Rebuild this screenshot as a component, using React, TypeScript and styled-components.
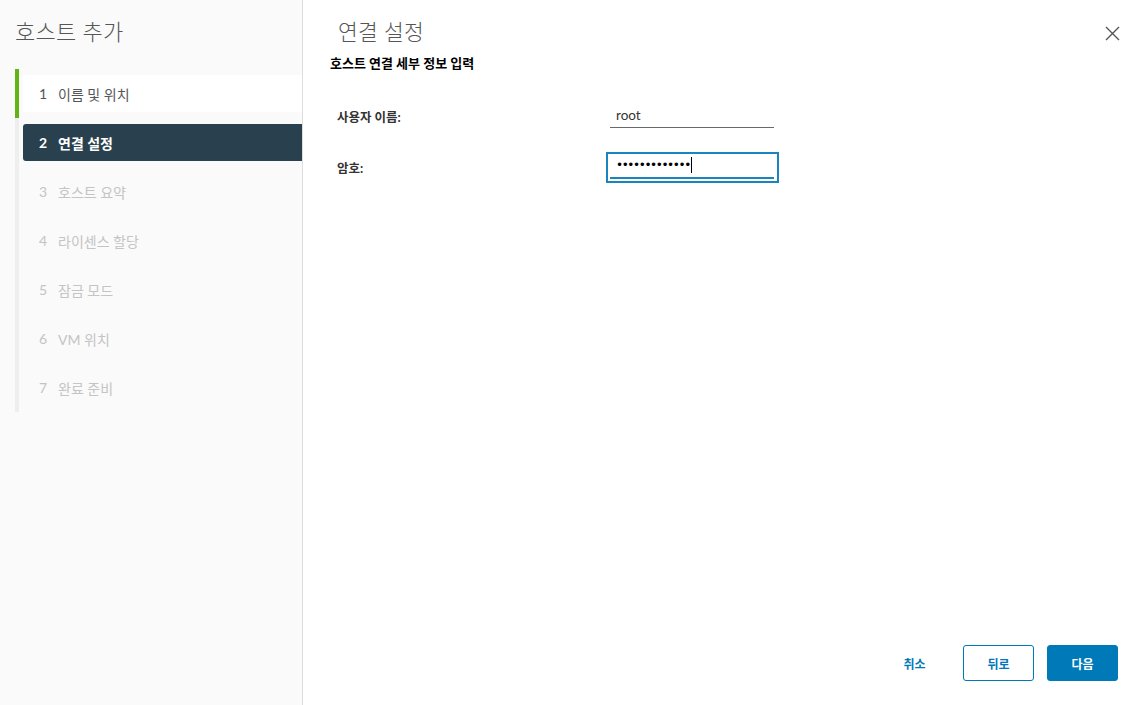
import React from "react";
import styled, { createGlobalStyle } from "styled-components";

const GlobalStyle = createGlobalStyle`
  html, body {
    margin: 0;
    padding: 0;
    background: #fff;
  }
  body {
    font-family: Lato, "Noto Sans CJK KR", sans-serif;
    color: #565656;
  }
`;

const Shell = styled.div`
  display: flex;
  height: 705px;
  width: 1142px;
  overflow: hidden;
`;

const Sidebar = styled.aside`
  width: 302px;
  flex-shrink: 0;
  background: #fafafa;
  border-right: 1px solid #dedede;
  padding-top: 18px;
  box-sizing: content-box;
`;

const SideTitle = styled.h1`
  margin: 0 0 23px 15px;
  font-size: 22px;
  line-height: 28px;
  font-weight: 300;
  color: #565656;
  letter-spacing: 0.2px;
`;

const StepList = styled.ol`
  list-style: none;
  margin: 0 0 0 15px;
  padding: 0;
`;

const StepSlot = styled.li<{ $done?: boolean }>`
  height: 49px;
  border-left: 4px solid ${(p) => (p.$done ? "#60b515" : "#eeeeee")};
  padding: 6px 0 6px 4px;
  box-sizing: border-box;
`;

const StepButton = styled.div<{ $state: "done" | "active" | "todo" }>`
  height: 37px;
  display: flex;
  align-items: center;
  padding-left: 16px;
  font-size: 14px;
  border-radius: ${(p) => (p.$state === "active" ? "3px 0 0 3px" : "0")};
  background: ${(p) =>
    p.$state === "active" ? "#29414e" : p.$state === "done" ? "#ffffff" : "transparent"};
  color: ${(p) =>
    p.$state === "active" ? "#ffffff" : p.$state === "done" ? "#565656" : "#c4c4c4"};
  font-weight: ${(p) => (p.$state === "active" ? 700 : 400)};
`;

const StepNum = styled.span`
  width: 19px;
  flex-shrink: 0;
`;

const Main = styled.section`
  flex: 1;
  display: flex;
  flex-direction: column;
  padding: 18px 18px 24px 27px;
`;

const Header = styled.div`
  display: flex;
  align-items: center;
  justify-content: space-between;
`;

const Title = styled.h2`
  margin: 0 0 0 8px;
  font-size: 21.5px;
  line-height: 28px;
  font-weight: 300;
  color: #565656;
  letter-spacing: 0.2px;
`;

const CloseButton = styled.button`
  border: 0;
  background: none;
  padding: 0;
  width: 24px;
  height: 24px;
  display: flex;
  align-items: center;
  justify-content: center;
  cursor: pointer;
  margin-top: 2px;
`;

const Subtitle = styled.p`
  margin: 8px 0 0;
  font-size: 13px;
  line-height: 18px;
  font-weight: 700;
  color: #000;
`;

const Form = styled.div`
  display: grid;
  grid-template-columns: 276px 173px;
  grid-auto-rows: 51px;
  margin-top: 19px;
  align-items: center;
`;

const Label = styled.label`
  padding-left: 7px;
  font-size: 12.5px;
  font-weight: 700;
  color: #333;
`;

const Field = styled.div<{ $focused?: boolean }>`
  height: 31px;
  box-sizing: border-box;
  border: 2px solid ${(p) => (p.$focused ? "#1a85bd" : "transparent")};
  padding: 0 2px 2px;
  display: flex;
  align-items: flex-end;
`;

const FieldInner = styled.div<{ $focused?: boolean }>`
  flex: 1;
  height: 24px;
  display: flex;
  align-items: center;
  padding-left: 6px;
  border-bottom: ${(p) => (p.$focused ? "2px solid #1a85bd" : "1px solid #6a6a6a")};
  font-size: 13.5px;
  color: #333;
  margin-right: 1px;
`;

const Dots = styled.span`
  font-size: 12px;
  letter-spacing: -1.4px;
  color: #000;
  font-family: "DejaVu Sans", sans-serif;
`;

const Caret = styled.span`
  display: inline-block;
  width: 1px;
  height: 16px;
  background: #000;
  margin-left: 1px;
`;

const Spacer = styled.div`
  flex: 1;
`;

const Footer = styled.div`
  display: flex;
  justify-content: flex-end;
  gap: 13px;
  padding-right: 6px;
`;

const Button = styled.button<{ $variant: "flat" | "outline" | "solid" }>`
  width: 71px;
  height: 36px;
  box-sizing: border-box;
  border-radius: 3px;
  font-family: Lato, "Noto Sans CJK KR", sans-serif;
  font-size: 12px;
  font-weight: 700;
  cursor: pointer;
  border: 1px solid ${(p) => (p.$variant === "flat" ? "transparent" : "#0079b8")};
  background: ${(p) => (p.$variant === "solid" ? "#0079b8" : "transparent")};
  color: ${(p) => (p.$variant === "solid" ? "#fff" : "#0079b8")};
`;

const steps: { label: string; state: "done" | "active" | "todo" }[] = [
  { label: "이름 및 위치", state: "done" },
  { label: "연결 설정", state: "active" },
  { label: "호스트 요약", state: "todo" },
  { label: "라이센스 할당", state: "todo" },
  { label: "잠금 모드", state: "todo" },
  { label: "VM 위치", state: "todo" },
  { label: "완료 준비", state: "todo" },
];

const App: React.FC = () => {
  return (
    <>
      <GlobalStyle />
      <Shell>
        <Sidebar>
          <SideTitle>호스트 추가</SideTitle>
          <StepList>
            {steps.map((s, i) => (
              <StepSlot key={s.label} $done={s.state === "done"}>
                <StepButton $state={s.state}>
                  <StepNum>{i + 1}</StepNum>
                  {s.label}
                </StepButton>
              </StepSlot>
            ))}
          </StepList>
        </Sidebar>
        <Main>
          <Header>
            <Title>연결 설정</Title>
            <CloseButton aria-label="닫기">
              <svg width="15" height="15" viewBox="0 0 15 15">
                <path d="M1 1L14 14M14 1L1 14" stroke="#555" strokeWidth="1.4" fill="none" />
              </svg>
            </CloseButton>
          </Header>
          <Subtitle>호스트 연결 세부 정보 입력</Subtitle>
          <Form>
            <Label>사용자 이름:</Label>
            <Field>
              <FieldInner>root</FieldInner>
            </Field>
            <Label>암호:</Label>
            <Field $focused>
              <FieldInner $focused>
                <Dots>•••••••••••••</Dots>
                <Caret />
              </FieldInner>
            </Field>
          </Form>
          <Spacer />
          <Footer>
            <Button $variant="flat">취소</Button>
            <Button $variant="outline">뒤로</Button>
            <Button $variant="solid">다음</Button>
          </Footer>
        </Main>
      </Shell>
    </>
  );
};

export default App;
